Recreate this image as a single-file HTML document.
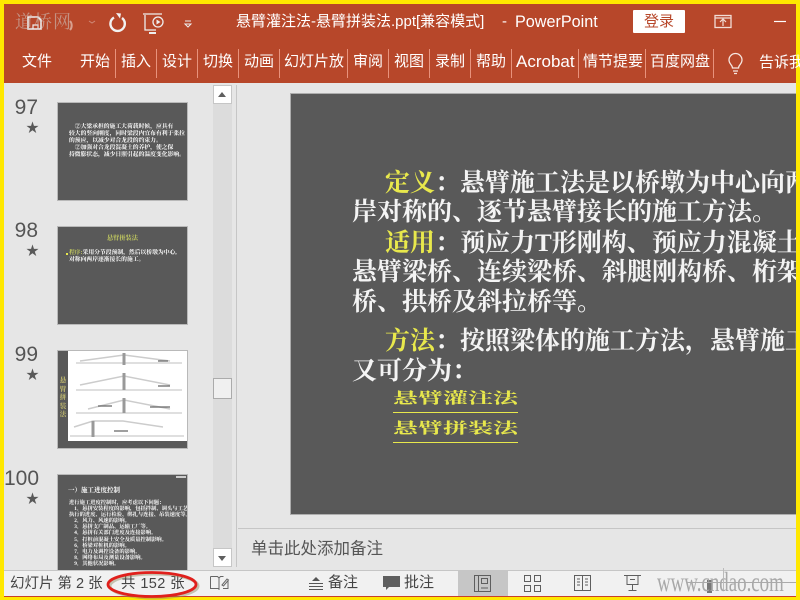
<!DOCTYPE html>
<html><head><meta charset="utf-8"><style>
*{margin:0;padding:0;box-sizing:border-box}
html,body{width:800px;height:600px;overflow:hidden;background:#FFE800}
body{position:relative;font-family:"Liberation Sans","Noto Sans CJK SC",sans-serif}
.a{position:absolute;white-space:nowrap}
.t{position:absolute;white-space:nowrap;color:#fff;font-size:15px;line-height:20px;top:52px}
.sep{position:absolute;top:49px;width:1px;height:29px;background:#E8927C}
.s{position:absolute;white-space:nowrap;font-family:"Liberation Serif","Noto Serif CJK SC",serif;font-weight:700;font-size:25px;line-height:30px;color:#f4f4f4}
.y{color:#E8E84C}
.n{position:absolute;font-size:21px;line-height:24px;color:#555;text-align:right;width:34px;left:4px}
.st{position:absolute;left:26px;font-size:13px;line-height:15px;color:#595959}
.th{position:absolute;left:57px;width:131px;height:99px;background:#595959;border:1px solid #b9b9b9;overflow:hidden}
.m{position:absolute;white-space:nowrap;color:#fff;font-size:5.800px;line-height:7px;font-family:"Liberation Serif","Noto Serif CJK SC",serif;font-weight:700}
.sb{position:absolute;font-size:15px;line-height:20px;color:#444;white-space:nowrap}
</style></head><body>
<div class="a" style="left:4px;top:4px;width:792px;height:79px;background:#B7472A"></div>
<div class="a" style="left:4px;top:83px;width:792px;height:487px;background:#E6E6E6"></div>
<div class="a" style="left:4px;top:570px;width:792px;height:26px;background:#F1F1F1;border-top:1px solid #C6C6C6"></div>
<div class="a" style="left:4px;top:596px;width:792px;height:1px;background:#C9402A"></div>

<svg class="a" style="left:0;top:0" width="200" height="40" fill="none">
<path d="M28 17h10l3 3v9H28z" stroke="#eee" stroke-width="1.600"/>
<path d="M33 29v-4h5v4" stroke="#eee" stroke-width="1.200"/>
<path d="M70 21a5 6 0 0 1 0 9" stroke="#d8a090" stroke-width="2"/>
<path d="M89 21l3 2 3-2" stroke="#d08a78" stroke-width="1"/>
<path d="M114 17.500a7.200 7.200 0 1 0 8 .5" stroke="#f2f2f2" stroke-width="2.400"/><path d="M116 13l5 .5-1 5z" fill="#f2f2f2"/>
<path d="M143 14h19M145 15v15h11" stroke="#eee" stroke-width="1.300"/><circle cx="158" cy="22" r="5" stroke="#eee" stroke-width="1.300"/><path d="M156.500 19.500l4 2.500-4 2.500z" fill="#eee"/><path d="M149 33h7" stroke="#eee" stroke-width="2"/>
<path d="M185 21h6M185 24l3 3 3-3z" stroke="#eee" stroke-width="1"/>
</svg>
<div class="a" style="left:15px;top:9px;font-size:18px;line-height:26px;color:rgba(205,195,190,.6);font-family:'Liberation Serif','Noto Serif CJK SC',serif;letter-spacing:1px">道桥网</div>

<div class="a" style="left:236px;top:12px;color:#fff;font-size:15px;line-height:20px">悬臂灌注法-悬臂拼装法.ppt[兼容模式]</div>
<div class="a" style="left:502px;top:12px;color:#fff;font-size:15px;line-height:20px">-</div>
<div class="a" style="left:515px;top:12px;color:#fff;font-size:16.200px;line-height:20px">PowerPoint</div>
<div class="a" style="left:633px;top:10px;width:52px;height:23px;background:#fff;border-radius:1px;color:#B7472A;font-size:15px;line-height:23px;text-align:center">登录</div>
<svg class="a" style="left:700px;top:10px" width="96" height="24" fill="none"><rect x="15" y="5.500" width="16" height="12" stroke="#f2ddd6" stroke-width="1.300"/><path d="M15 8h16M23 16v-6M20 12l3-3 3 3" stroke="#f2ddd6" stroke-width="1.200"/><path d="M74 11.500h12" stroke="#fff" stroke-width="1.200"/></svg>

<div class="t" style="left:22px">文件</div>
<div class="t" style="left:80px">开始</div><div class="sep" style="left:115px"></div>
<div class="t" style="left:121px">插入</div><div class="sep" style="left:156px"></div>
<div class="t" style="left:162px">设计</div><div class="sep" style="left:197px"></div>
<div class="t" style="left:203px">切换</div><div class="sep" style="left:238px"></div>
<div class="t" style="left:244px">动画</div><div class="sep" style="left:279px"></div>
<div class="t" style="left:284px">幻灯片放</div><div class="sep" style="left:347px"></div>
<div class="t" style="left:353px">审阅</div><div class="sep" style="left:388px"></div>
<div class="t" style="left:394px">视图</div><div class="sep" style="left:429px"></div>
<div class="t" style="left:435px">录制</div><div class="sep" style="left:470px"></div>
<div class="t" style="left:476px">帮助</div><div class="sep" style="left:511px"></div>
<div class="t" style="left:516px;top:52px;font-size:17px">Acrobat</div><div class="sep" style="left:578px"></div>
<div class="t" style="left:583px">情节提要</div><div class="sep" style="left:645px"></div>
<div class="t" style="left:650px">百度网盘</div><div class="sep" style="left:713px"></div>
<svg class="a" style="left:724px;top:51px" width="24" height="24" fill="none" stroke="#f6e6e0" stroke-width="1.300"><path d="M8.500 17c0-3-3.500-4-3.500-8a6.500 6.500 0 0 1 13 0c0 4-3.500 5-3.500 8z"/><path d="M9 20h5M10 22.500h3"/></svg>
<div class="t" style="left:759px;top:53px">告诉我</div>

<!-- thumbnails -->
<div class="n" style="top:96px">97</div><div class="st" style="top:120px">★</div>
<div class="th" style="top:102px">
<div class="m" style="left:11px;top:21px">　②大梁承担的施工大荷载时候，应具有<br>较大的竖向刚度，同时梁段内宜布有利于张拉<br>的预应，以减少对合龙段的约束力。<br>　②加强对合龙段混凝土的养护，使之保<br>持微膨状态，减少日照引起的温度变化影响。</div>
</div>
<div class="n" style="top:219px">98</div><div class="st" style="top:243px">★</div>
<div class="th" style="top:226px">
<div class="m" style="left:49px;top:8px;color:#C8D060;font-size:6.200px">悬臂拼装法</div>
<div class="a" style="left:8px;top:26px;width:2px;height:2px;background:#E8E84C"></div>
<div class="m" style="left:11px;top:23px;font-size:5.800px"><span style="color:#C8D060">程序:</span>采用分节段预制，然后以桥墩为中心,<br>对称向两岸逐渐接长的施工。</div>
</div>
<div class="n" style="top:343px">99</div><div class="st" style="top:367px">★</div>
<div class="th" style="top:350px">
<div class="a" style="left:10px;top:0;width:120px;height:90px;background:#fff"></div>
<div class="m" style="left:0;top:26px;width:10px;text-align:center;color:#C8C070;white-space:normal;font-size:6.500px;line-height:8.500px">悬臂拼装法</div>
<svg class="a" style="left:10px;top:0" width="120" height="90" fill="none" stroke="#aaa" stroke-width=".7">
<path d="M8 12h106M8 39h106M8 62h106M2 85h114"/>
<path d="M12 10l44-6 46 6M12 34l44-9 46 9M20 58l36-9 46 9M6 76l19-6 30 0 40 6" stroke="#ccc" stroke-width="1.500"/>
<path d="M56 2v12M56 22v17M56 47v15M25 70v16" stroke="#999" stroke-width="3"/>
<path d="M90 10h10M90 35h12M30 55h14M82 56h20M46 80h14" stroke="#666" stroke-width="1.200"/></svg>
</div>
<div class="n" style="top:467px">100</div><div class="st" style="top:491px">★</div>
<div class="th" style="top:474px;height:96px;border-bottom:0">
<div class="a" style="left:118px;top:1px;width:10px;height:2px;background:#ccc"></div>
<div class="m" style="left:10px;top:12px;font-size:6.500px">一）施工进度控制</div>
<div class="m" style="left:11px;top:25px;font-size:5.300px;line-height:6.100px">进行施工进度控制时，应考虑以下问题：<br>　1．悬拼安装程度的影响，包括拌制、调头与工艺<br>执行的进度、运行检验、绑扎与连接、吊装速度等。<br>　2．风力、风速的影响。<br>　3．悬拼支广制品、运输工厂等。<br>　4．悬拼有关部门进度及连接影响。<br>　5．打桩前混凝土安全及质量控制影响。<br>　6．桥梁对桩机的影响。<br>　7．电力及调控设备的影响。<br>　8．网络布局及测量设备影响。<br>　9．其他状况影响。</div>
</div>

<!-- scrollbar -->
<div class="a" style="left:213px;top:85px;width:19px;height:482px;background:#DCDCDC"></div>
<div class="a" style="left:213px;top:85px;width:19px;height:19px;background:#fff;border:1px solid #C6C6C6"></div>
<div class="a" style="left:218px;top:92px;width:0;height:0;border:4.500px solid transparent;border-top:0;border-bottom:5px solid #5f5f5f"></div>
<div class="a" style="left:213px;top:378px;width:19px;height:21px;background:#F0F0F0;border:1px solid #ABABAB"></div>
<div class="a" style="left:213px;top:548px;width:19px;height:19px;background:#fff;border:1px solid #C6C6C6"></div>
<div class="a" style="left:218px;top:556px;width:0;height:0;border:4.500px solid transparent;border-bottom:0;border-top:5px solid #5f5f5f"></div>
<div class="a" style="left:236px;top:85px;width:1px;height:482px;background:#C6C6C6"></div>

<!-- slide -->
<div class="a" style="left:290px;top:93px;width:506px;height:422px;background:#595959;border:1px solid #ADADAD;border-right:0"></div>
<div class="a" style="left:238px;top:528px;width:558px;height:1px;background:#C6C6C6"></div>
<div class="a" style="left:251px;top:537px;font-size:16.500px;line-height:24px;color:#555">单击此处添加备注</div>
<div class="a" style="left:291px;top:94px;width:505px;height:420px;overflow:hidden">
<div class="s" style="left:94px;top:75px"><span class="y">定义</span>：悬臂施工法是以桥墩为中心向两</div>
<div class="s" style="left:61px;top:104px">岸对称的、逐节悬臂接长的施工方法。</div>
<div class="s" style="left:94px;top:135px"><span class="y">适用</span>：预应力T形刚构、预应力混凝土</div>
<div class="s" style="left:61px;top:164px">悬臂梁桥、连续梁桥、斜腿刚构桥、桁架</div>
<div class="s" style="left:61px;top:194px">桥、拱桥及斜拉桥等。</div>
<div class="s" style="left:94px;top:233px"><span class="y">方法</span>：按照梁体的施工方法，悬臂施工</div>
<div class="s" style="left:61px;top:263px">又可分为：</div>
<div class="s y" style="left:102px;top:291px;font-size:25px;line-height:28px;transform-origin:0 50%;transform:scaleY(.6)">悬臂灌注法</div>
<div class="a" style="left:102px;top:318px;width:125px;height:1px;background:#E8E84C"></div>
<div class="s y" style="left:102px;top:321px;font-size:25px;line-height:28px;transform-origin:0 50%;transform:scaleY(.6)">悬臂拼装法</div>
<div class="a" style="left:102px;top:348px;width:125px;height:1px;background:#E8E84C"></div>
</div>

<!-- status bar -->
<div class="sb" style="left:10px;top:574px;font-size:14.500px">幻灯片 第 2 张</div>
<div class="sb" style="left:121px;top:574px;font-size:14.500px;letter-spacing:.4px">共 152 张</div>
<svg class="a" style="left:100px;top:566px" width="106" height="34" fill="none"><ellipse cx="54" cy="20" rx="44" ry="12" stroke="#8d8a60" stroke-width="3" opacity=".45"/><ellipse cx="52" cy="18.500" rx="44" ry="12" stroke="#E0201C" stroke-width="2.800"/></svg>
<svg class="a" style="left:208px;top:573px" width="24" height="20" fill="none" stroke="#666" stroke-width="1"><path d="M2.500 3.500h7l1.500 1.500 1.500-1.500h3M11 5v12M2.500 3.500v12h8M20 8v7.500h-5"/><path d="M14 12l5-6 1.500 1-5 6z"/></svg>
<svg class="a" style="left:306px;top:574px" width="20" height="18" fill="none" stroke="#555" stroke-width="1"><path d="M3 9.500h14M3 12.500h14M3 15.500h14"/><path d="M10 3l4 4H6z" fill="#555" stroke="none"/></svg>
<div class="sb" style="left:328px;top:573px">备注</div>
<svg class="a" style="left:382px;top:574px" width="20" height="18"><path d="M1 2h17v11H7l-3 3v-3H1z" fill="#5f5f5f"/></svg>
<div class="sb" style="left:404px;top:573px">批注</div>
<div class="a" style="left:458px;top:570px;width:50px;height:26px;background:#C6C6C6"></div>
<svg class="a" style="left:470px;top:572px" width="320" height="24" fill="none" stroke="#5e5e5e" stroke-width="1"><rect x="4.500" y="3.500" width="16" height="16"/><path d="M8.500 3.500v16"/><rect x="11.500" y="6.500" width="6" height="5"/><path d="M11 16h7"/><rect x="54.500" y="3.500" width="6" height="6"/><rect x="64.500" y="3.500" width="6" height="6"/><rect x="54.500" y="13.500" width="6" height="6"/><rect x="64.500" y="13.500" width="6" height="6"/><path d="M104.500 3.500h16v15h-16zM112.500 4v15M107 7h3M107 10h3M107 13h3M115 7h3M115 10h3M115 13h3"/><path d="M154 3.500h17M157 3.500v9h11v-9M162.500 12.500v6M158.500 18.500h8M160 7.500h5"/></svg>
<div class="a" style="left:707px;top:580px;width:5px;height:13px;background:#777"></div>
<div class="a" style="left:657px;top:567px;font-family:'Liberation Serif',serif;font-size:27px;line-height:30px;color:#a8a8a8;transform-origin:0 50%;transform:scaleX(.7)">www.cndao.com</div>
<div class="a" style="left:686px;top:582px;width:110px;height:1px;background:#aaa"></div>
<div class="a" style="left:723px;top:568px;width:1px;height:22px;background:#bbb"></div>
</body></html>
